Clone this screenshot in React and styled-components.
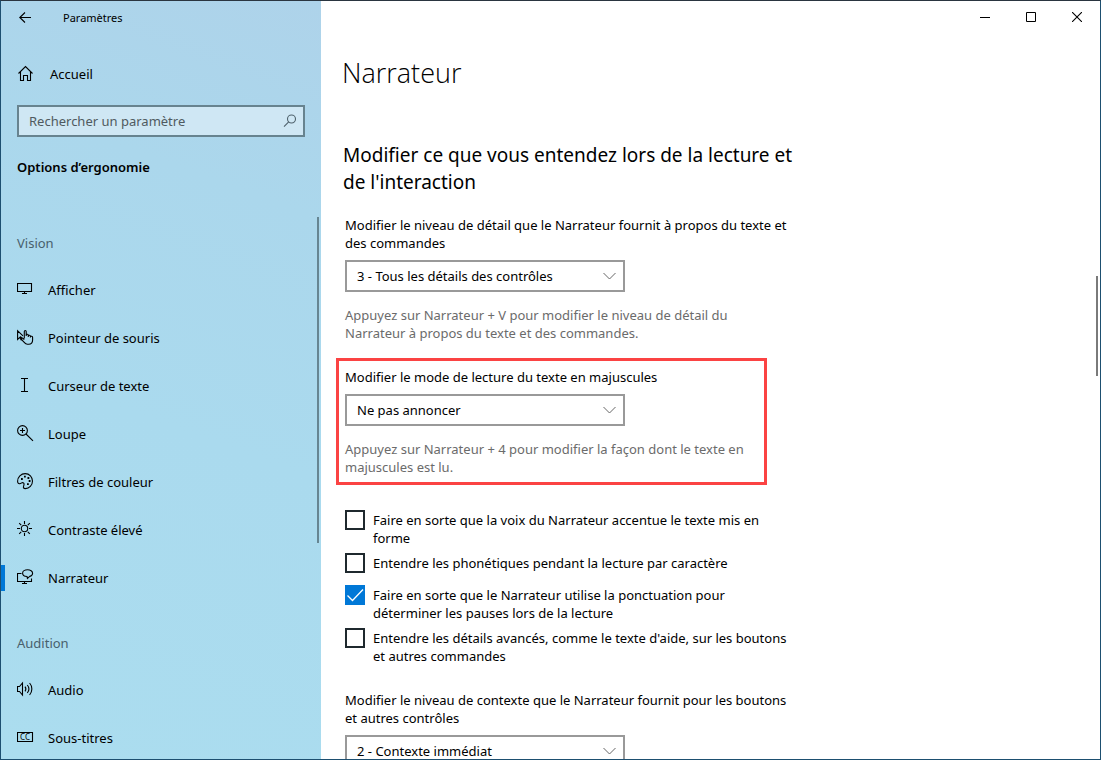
import React, { useState } from 'react'
import styled, { createGlobalStyle } from 'styled-components'

const GlobalStyle = createGlobalStyle`
  * {
    box-sizing: border-box;
  }
  body {
    margin: 0;
    font-family: "Noto Sans", "Open Sans", sans-serif;
    font-size: 13px;
    line-height: 18px;
    color: #000;
    background: #fff;
  }
  h1, h2, p {
    margin: 0;
    font-weight: 400;
  }
  button, input, select {
    font: inherit;
    color: inherit;
  }
`

const Window = styled.div`
  display: grid;
  grid-template-columns: 320px 1fr;
  height: 100vh;
  overflow: hidden;
  border: 1px solid #1d4f70;
  border-top-color: #2a3540;
`

const Sidebar = styled.aside`
  position: relative;
  display: flex;
  flex-direction: column;
  min-height: 0;
  overflow: hidden;
  background: linear-gradient(200deg, #aed3ea 0%, #abd7ec 25%, #aadaee 55%, #abddef 100%);
`

const TitleRow = styled.div`
  display: flex;
  align-items: center;
  height: 33px;
  font-size: 11px;
`

const IconButton = styled.button`
  display: flex;
  align-items: center;
  justify-content: center;
  width: ${({ $width }) => $width}px;
  height: 32px;
  padding: 0;
  border: 0;
  background: transparent;
`

const WindowTitle = styled.span`
  padding-left: 14px;
`

const NavLink = styled.a`
  display: flex;
  align-items: center;
  gap: 13px;
  height: 48px;
  padding-left: 12px;
  border-left: 4px solid ${({ $active }) => ($active ? '#0078d7' : 'transparent')};
  border-image: ${({ $active }) =>
    $active ? 'linear-gradient(transparent 12px, #0078d7 12px, #0078d7 36px, transparent 36px) 1' : 'none'};
  color: #000;
  text-decoration: none;
`

const HomeLink = styled(NavLink)`
  margin-top: 16px;
  gap: 15px;
`

const SearchBox = styled.label`
  display: flex;
  align-items: center;
  height: 32px;
  margin: 7px 16px 0;
  padding: 0 6px 0 10px;
  border: 2px solid #67838f;
  background: #cfe7f4;
`

const SearchInput = styled.input`
  flex: 1;
  min-width: 0;
  padding: 0;
  border: 0;
  outline: 0;
  background: transparent;
  &::placeholder {
    color: #4f5a60;
    opacity: 1;
  }
`

const Category = styled.h2`
  padding: 21px 16px 0;
  font-size: 13px;
  font-weight: 600;
`

const NavScroll = styled.nav`
  position: relative;
  flex: 1;
  min-height: 0;
  margin-top: 40px;
  overflow: hidden;
`

const NavHeading = styled.p`
  padding: ${({ $first }) => ($first ? 18 : 32)}px 16px 14px;
  color: #48606c;
`

const ScrollThumb = styled.div`
  position: absolute;
  top: ${({ $top }) => $top}px;
  right: ${({ $right }) => $right}px;
  width: 2px;
  height: ${({ $size }) => $size}px;
  background: ${({ $color }) => $color};
`

const Main = styled.main`
  position: relative;
  min-width: 0;
  overflow: hidden;
`

const WindowControls = styled.div`
  display: flex;
  justify-content: flex-end;
`

const Content = styled.div`
  max-width: 474px;
  padding: 22px 0 0 24px;
`

const PageTitle = styled.h1`
  margin-left: -3px;
  font-family: "Open Sans", "Noto Sans", sans-serif;
  font-size: 27px;
  font-weight: 300;
  line-height: 36px;
`

const SectionTitle = styled.h2`
  margin: 51px 0 20px -2px;
  font-size: 19px;
  line-height: 27px;
`

const Field = styled.div`
  label {
    display: block;
    margin-bottom: 8px;
  }
`

const HighlightedField = styled(Field)`
  margin: 16px 28px 25px -9px;
  padding: 7px 6px 6px;
  border: 3px solid #fb4343;
`

const SelectBox = styled.div`
  position: relative;
  max-width: 280px;
  svg {
    position: absolute;
    top: 12px;
    right: 9px;
    pointer-events: none;
  }
`

const Select = styled.select`
  display: block;
  appearance: none;
  width: 100%;
  height: 32px;
  padding: 0 32px 0 10px;
  border: 2px solid #999;
  border-radius: 0;
  background: #fff;
`

const Hint = styled.p`
  max-width: 420px;
  margin-top: 14px;
  color: #6b6b6b;
`

const CheckList = styled.div`
  display: flex;
  flex-direction: column;
  gap: 6px;
  margin-bottom: 26px;
`

const CheckRow = styled.label`
  display: grid;
  grid-template-columns: 20px 1fr;
  column-gap: 8px;
  min-height: 26px;
  span {
    padding-top: 1px;
  }
`

const CheckInput = styled.input`
  appearance: none;
  grid-area: 1 / 1;
  width: 20px;
  height: 20px;
  margin: 0;
  border: 2px solid #1f292e;
  &:checked {
    border-color: #0078d7;
    background: #0078d7;
  }
`

const CheckMark = styled.svg`
  grid-area: 1 / 1;
  width: 20px;
  height: 20px;
  pointer-events: none;
`

const Icon = ({ children }) => (
  <svg width="18" height="18" viewBox="0 0 18 18" fill="none" stroke="#000" strokeWidth="1.1" aria-hidden="true">
    {children}
  </svg>
)

const icons = {
  display: <path d="M.5 2.5h14v8H.5zM7.5 10.5v2M5 12.5h5" />,
  pointer: (
    <>
      <path d="M6 6.800L.6 1.800v8.600l2.200-2 1.300 2.500 1.100-.5M3.200 7.500l2 2" />
      <path d="M7.300 9.500V2.600c0-1.400 1.900-1.400 1.900 0V7m0-1.200c.4-.9 2.100-.7 2.100.4V8m0-1.200c.4-.9 2.100-.7 2.100.4v1.200m0-.7c.5-.8 2.200-.5 2.200.6V11c0 2.600-1.500 4.200-3.900 4.200h-1.300c-1.300 0-2.200-.6-2.900-1.500L4.600 10.600c-.7-1 .5-2 1.400-1.200l1.300 1.300" />
    </>
  ),
  cursor: <path d="M4 1.500h7M7.500 1.500v13M4 14.500h7" />,
  magnifier: (
    <>
      <circle cx="5.500" cy="5.500" r="4.900" />
      <path d="M9 9l7 6.800M5.500 3v5M3 5.500h5" />
    </>
  ),
  palette: (
    <>
      <path d="M.6 8.200C.6 4 4 .6 8.200.6s7.300 3.300 7.300 7.500-3.300 7.500-7.100 7.500c-1.900 0-2.400-1-1.800-2.500.7-1.700.6-3-.5-3.400-1.200-.4-2 .8-3.300 1C1.400 10.900.6 9.800.6 8.200z" />
      <path strokeWidth="1.800" d="M4 6h1.800M7 3.700h1.800M10.500 5h1.800M11.700 8h1.800M10 11.200h1.800" />
    </>
  ),
  contrast: (
    <>
      <circle cx="7.500" cy="7.500" r="3.200" />
      <path d="M7.500 0v3M7.500 12v3M0 7.500h3M12 7.500h3M2.200 2.200l2 2M10.800 10.800l2 2M12.800 2.200l-2 2M4.200 10.800l-2 2" />
    </>
  ),
  narrator: (
    <>
      <path d="M4.500 4.500h-4v8h14V9.500M7.500 12.500v2M5 14.500h5" />
      <path d="M10 7.500C7.300 7.300 5.600 5.900 5.600 4.200c0-1.900 2.200-3.400 5-3.400s5 1.500 5 3.400c0 1.600-1.200 2.700-2.900 3.200L10.400 9.500z" />
    </>
  ),
  audio: (
    <>
      <path d="M.5 5.500h2L5.500 2v12L2.500 10.500h-2z" />
      <path d="M8 5.700c1 1.300 1 3.300 0 4.600M10.300 4c1.900 2.300 1.900 5.700 0 8M12.600 2c3 3.400 3 8.600 0 12" />
    </>
  ),
  captions: (
    <>
      <path d="M.5 3.500h15v9H.5z" />
      <text x="8" y="10.900" fontSize="8" textAnchor="middle" fill="#000" stroke="none">CC</text>
    </>
  ),
}

const vision = [
  { label: 'Afficher', icon: 'display' },
  { label: 'Pointeur de souris', icon: 'pointer' },
  { label: 'Curseur de texte', icon: 'cursor' },
  { label: 'Loupe', icon: 'magnifier' },
  { label: 'Filtres de couleur', icon: 'palette' },
  { label: 'Contraste élevé', icon: 'contrast' },
  { label: 'Narrateur', icon: 'narrator', active: true },
]

const audition = [
  { label: 'Audio', icon: 'audio' },
  { label: 'Sous-titres', icon: 'captions' },
]

const options = [
  { id: 'accent', label: 'Faire en sorte que la voix du Narrateur accentue le texte mis en forme' },
  { id: 'phonetic', label: 'Entendre les phonétiques pendant la lecture par caractère' },
  { id: 'punctuation', label: 'Faire en sorte que le Narrateur utilise la ponctuation pour déterminer les pauses lors de la lecture' },
  { id: 'details', label: "Entendre les détails avancés, comme le texte d'aide, sur les boutons et autres commandes" },
]

const NavItems = ({ items }) =>
  items.map(({ label, icon, active }) => (
    <NavLink href="#" key={label} $active={active} aria-current={active ? 'page' : undefined}>
      <Icon>{icons[icon]}</Icon>
      {label}
    </NavLink>
  ))

const Dropdown = ({ id, value }) => (
  <SelectBox>
    <Select id={id} defaultValue={value}>
      <option>{value}</option>
    </Select>
    <svg width="13" height="8" viewBox="0 0 13 8" fill="none" stroke="#666" aria-hidden="true">
      <path d="M.5 1l6 6 6-6" />
    </svg>
  </SelectBox>
)

export default function App() {
  const [checked, setChecked] = useState({ punctuation: true })
  const toggle = (id) => setChecked({ ...checked, [id]: !checked[id] })

  return (
    <Window>
      <GlobalStyle />
      <Sidebar>
        <TitleRow>
          <IconButton $width={48} aria-label="Retour">
            <svg width="12" height="12" viewBox="0 0 12 12" fill="none" stroke="#000" strokeWidth="1.1">
              <path d="M12 5.500H.8M6 .5L.8 5.500l5.200 5" />
            </svg>
          </IconButton>
          <WindowTitle>Paramètres</WindowTitle>
        </TitleRow>
        <HomeLink href="#">
          <Icon>
            <path d="M1.500 8.500L8.500 1.600l7 6.900M3.500 7v8.500h3v-5h4v5h3V7" />
          </Icon>
          Accueil
        </HomeLink>
        <SearchBox>
          <SearchInput type="text" placeholder="Rechercher un paramètre" aria-label="Rechercher un paramètre" />
          <svg width="14" height="14" viewBox="0 0 14 14" fill="none" stroke="#4f626c" strokeWidth="1.1" aria-hidden="true">
            <circle cx="8.500" cy="5" r="4" />
            <path d="M5.700 7.900L1 12.600" />
          </svg>
        </SearchBox>
        <Category>Options d’ergonomie</Category>
        <NavScroll>
          <NavHeading $first>Vision</NavHeading>
          <NavItems items={vision} />
          <NavHeading>Audition</NavHeading>
          <NavItems items={audition} />
          <ScrollThumb $top={1} $right={2} $size={326} $color="#668592" />
        </NavScroll>
      </Sidebar>
      <Main>
        <WindowControls>
          <IconButton $width={46} aria-label="Réduire">
            <svg width="10" height="10" viewBox="0 0 10 10" stroke="#000"><path d="M0 5.500h10" /></svg>
          </IconButton>
          <IconButton $width={46} aria-label="Agrandir">
            <svg width="10" height="10" viewBox="0 0 10 10" fill="none" stroke="#000"><path d="M.5.500h9v9h-9z" /></svg>
          </IconButton>
          <IconButton $width={46} aria-label="Fermer">
            <svg width="10" height="10" viewBox="0 0 10 10" stroke="#000" strokeWidth="1.1"><path d="M0 0l10 10M10 0L0 10" /></svg>
          </IconButton>
        </WindowControls>
        <Content>
          <PageTitle>Narrateur</PageTitle>
          <SectionTitle>Modifier ce que vous entendez lors de la lecture et de l'interaction</SectionTitle>
          <Field>
            <label htmlFor="detail">Modifier le niveau de détail que le Narrateur fournit à propos du texte et des commandes</label>
            <Dropdown id="detail" value="3 - Tous les détails des contrôles" />
            <Hint>Appuyez sur Narrateur + V pour modifier le niveau de détail du Narrateur à propos du texte et des commandes.</Hint>
          </Field>
          <HighlightedField>
            <label htmlFor="caps">Modifier le mode de lecture du texte en majuscules</label>
            <Dropdown id="caps" value="Ne pas annoncer" />
            <Hint>Appuyez sur Narrateur + 4 pour modifier la façon dont le texte en majuscules est lu.</Hint>
          </HighlightedField>
          <CheckList>
            {options.map(({ id, label }) => (
              <CheckRow key={id}>
                <CheckInput type="checkbox" checked={!!checked[id]} onChange={() => toggle(id)} />
                {checked[id] && (
                  <CheckMark viewBox="0 0 20 20" fill="none" stroke="#fff" strokeWidth="1.3">
                    <path d="M2.500 10.500l5 5L18 4.500" />
                  </CheckMark>
                )}
                <span>{label}</span>
              </CheckRow>
            ))}
          </CheckList>
          <Field>
            <label htmlFor="context">Modifier le niveau de contexte que le Narrateur fournit pour les boutons et autres contrôles</label>
            <Dropdown id="context" value="2 - Contexte immédiat" />
          </Field>
        </Content>
        <ScrollThumb $top={275} $right={2} $size={100} $color="#7a7a7a" />
      </Main>
    </Window>
  )
}
